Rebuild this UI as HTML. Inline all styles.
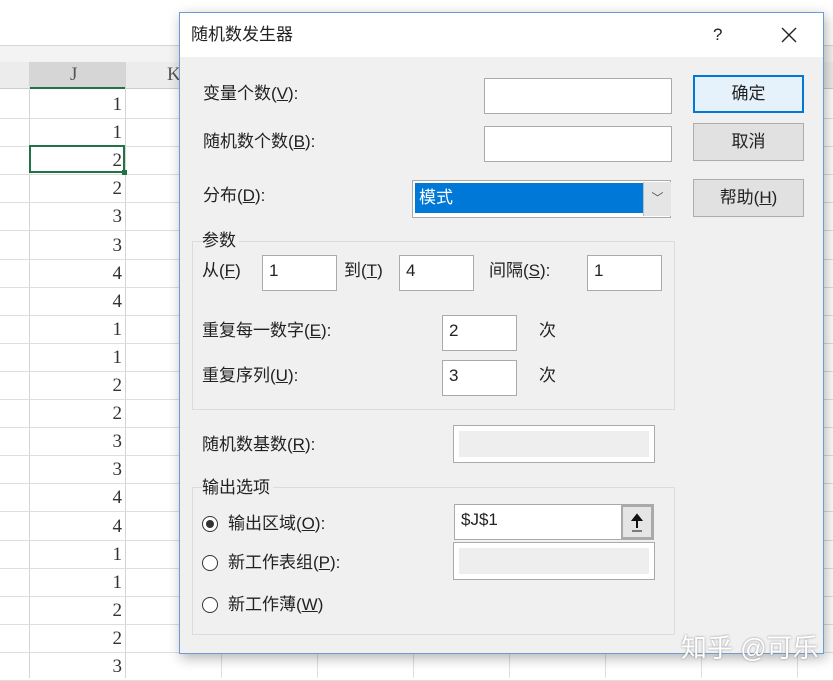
<!DOCTYPE html><html><head><meta charset="utf-8"><style>
body{margin:0;width:833px;height:678px;overflow:hidden;background:#fff;font-family:"Liberation Sans","Noto Sans CJK SC",sans-serif;position:relative}
.a{position:absolute}
.cell{position:absolute;left:30px;width:92px;text-align:right;font-family:"Liberation Serif","Noto Serif CJK SC",serif;font-size:19px;color:#333}
.lbl{position:absolute;font-size:17px;color:#222;line-height:20px}
.in{position:absolute;background:#fff;border:1px solid #aaa;box-sizing:border-box;font-size:17px;padding:5px 6px;color:#222;line-height:20px}
.btn{position:absolute;left:693px;width:111px;height:38px;background:#e1e1e1;border:1px solid #adadad;box-sizing:border-box;text-align:center;line-height:36px;font-size:17px;color:#222}
.grp{position:absolute;border:1px solid #dcdcdc}
.rad{position:absolute;width:16px;height:16px;border:1px solid #333;border-radius:50%;background:#fff;box-sizing:border-box}
u{text-decoration:underline}
</style></head><body>
<div class="a" style="left:0;top:0;width:833px;height:45px;background:#fff;border-bottom:1px solid #d4d4d4"></div>
<div class="a" style="left:0;top:46px;width:833px;height:16px;background:#f3f3f3"></div>
<div class="a" style="left:0;top:62px;width:833px;height:26px;background:#ececec;border-bottom:1px solid #ccc"></div>
<div class="a" style="left:30px;top:62px;width:95px;height:25px;background:#d6d6d6;border-bottom:2px solid #217346"></div>
<div class="a" style="left:70px;top:64px;font-family:'Liberation Serif',serif;font-size:19px;color:#555">J</div>
<div class="a" style="left:167px;top:64px;font-family:'Liberation Serif',serif;font-size:19px;color:#555">K</div>
<div class="a" style="left:29px;top:62px;width:1px;height:616px;background:#d4d4d4"></div>
<div class="a" style="left:125px;top:62px;width:1px;height:616px;background:#d4d4d4"></div>
<div id="rows"></div>
<div class="a" style="left:29px;top:145px;width:96px;height:28px;border:2px solid #217346;box-sizing:border-box"></div>
<div class="a" style="left:122px;top:170px;width:5px;height:5px;background:#217346"></div>
<div class="a" style="left:179px;top:12px;width:645px;height:642px;background:#f0f0f0;border:1px solid #6a9ed0;box-sizing:border-box;box-shadow:2px 4px 12px rgba(0,0,0,.3)"></div>
<div class="a" style="left:180px;top:13px;width:643px;height:44px;background:#fff"></div>
<div class="lbl" style="left:191px;top:25px">随机数发生器</div>
<div class="lbl" style="left:713px;top:25px">?</div>
<svg class="a" style="left:781px;top:27px" width="16" height="16"><path d="M1 1L15 15M15 1L1 15" stroke="#222" stroke-width="1.4"/></svg>
<div class="lbl" style="left:203px;top:84px">变量个数(<u>V</u>):</div>
<div class="in" style="left:484px;top:78px;width:188px;height:36px"></div>
<div class="lbl" style="left:203px;top:132px">随机数个数(<u>B</u>):</div>
<div class="in" style="left:484px;top:126px;width:188px;height:36px"></div>
<div class="lbl" style="left:203px;top:186px">分布(<u>D</u>):</div>
<div class="in" style="left:412px;top:180px;width:259px;height:38px;padding:2px"><div style="background:#0078d7;color:#fff;height:30px;width:229px;line-height:30px;padding-left:4px;box-sizing:border-box">模式</div></div>
<div class="a" style="left:643px;top:182px;width:27px;height:34px;background:#e5e5e5;border-left:1px solid #bbb;text-align:center;line-height:32px;color:#555;font-size:12px">﹀</div>
<div class="btn" style="top:75px;border:2px solid #0078d7;background:#e5f1fb;line-height:34px">确定</div>
<div class="btn" style="top:123px">取消</div>
<div class="btn" style="top:179px">帮助(<u>H</u>)</div>
<div class="grp" style="left:192px;top:241px;width:481px;height:167px"></div>
<div class="lbl" style="left:202px;top:231px;background:#f0f0f0;padding-right:3px">参数</div>
<div class="lbl" style="left:202px;top:261px">从(<u>F</u>)</div>
<div class="in" style="left:262px;top:255px;width:75px;height:36px">1</div>
<div class="lbl" style="left:344px;top:261px">到(<u>T</u>)</div>
<div class="in" style="left:399px;top:255px;width:75px;height:36px">4</div>
<div class="lbl" style="left:489px;top:261px">间隔(<u>S</u>):</div>
<div class="in" style="left:587px;top:255px;width:75px;height:36px">1</div>
<div class="lbl" style="left:202px;top:321px">重复每一数字(<u>E</u>):</div>
<div class="in" style="left:442px;top:315px;width:75px;height:36px">2</div>
<div class="lbl" style="left:539px;top:321px">次</div>
<div class="lbl" style="left:202px;top:366px">重复序列(<u>U</u>):</div>
<div class="in" style="left:442px;top:360px;width:75px;height:36px">3</div>
<div class="lbl" style="left:539px;top:366px">次</div>
<div class="lbl" style="left:202px;top:435px">随机数基数(<u>R</u>):</div>
<div class="in" style="left:454px;top:426px;width:200px;height:36px;border:5px solid #fff;background:#eee;outline:1px solid #aaa"></div>
<div class="grp" style="left:192px;top:487px;width:481px;height:146px"></div>
<div class="lbl" style="left:202px;top:478px;background:#f0f0f0;padding-right:3px">输出选项</div>
<div class="rad" style="left:202px;top:516px"><div style="width:8px;height:8px;border-radius:50%;background:#333;margin:3px"></div></div>
<div class="lbl" style="left:228px;top:514px">输出区域(<u>O</u>):</div>
<div class="in" style="left:454px;top:504px;width:200px;height:36px">$J$1</div>
<div class="a" style="left:621px;top:505px;width:32px;height:34px;background:#e5e5e5;border:2px solid #aaa;box-sizing:border-box"><svg width="28" height="30"><path d="M14 8L14 21M10 13L14 8L18 13Z" stroke="#111" stroke-width="2" fill="#111"/><path d="M9 24H19" stroke="#111" stroke-width="1"/></svg></div>
<div class="rad" style="left:202px;top:555px"></div>
<div class="lbl" style="left:228px;top:553px">新工作表组(<u>P</u>):</div>
<div class="in" style="left:454px;top:543px;width:200px;height:36px;border:5px solid #fff;background:#eee;outline:1px solid #aaa"></div>
<div class="rad" style="left:202px;top:597px"></div>
<div class="lbl" style="left:228px;top:595px">新工作薄(<u>W</u>)</div>
<div class="a" style="left:681px;top:628px;font-size:26px;color:#fff;text-shadow:0 0 2px #888">知乎 @可乐</div>
<script>
var v=[1,1,2,2,3,3,4,4,1,1,2,2,3,3,4,4,1,1,2,2,3],h='';
for(var i=0;i<v.length;i++){var t=91+i*28.1;h+='<div class="cell" style="top:'+(t+3)+'px">'+v[i]+'</div><div class="a" style="left:0;top:'+(t+27)+'px;width:833px;height:1px;background:#dedede"></div>';}
for(var x=221;x<833;x+=96)h+='<div class="a" style="left:'+x+'px;top:62px;width:1px;height:616px;background:#dedede"></div>';
document.getElementById('rows').innerHTML=h;
</script>
</body></html>
